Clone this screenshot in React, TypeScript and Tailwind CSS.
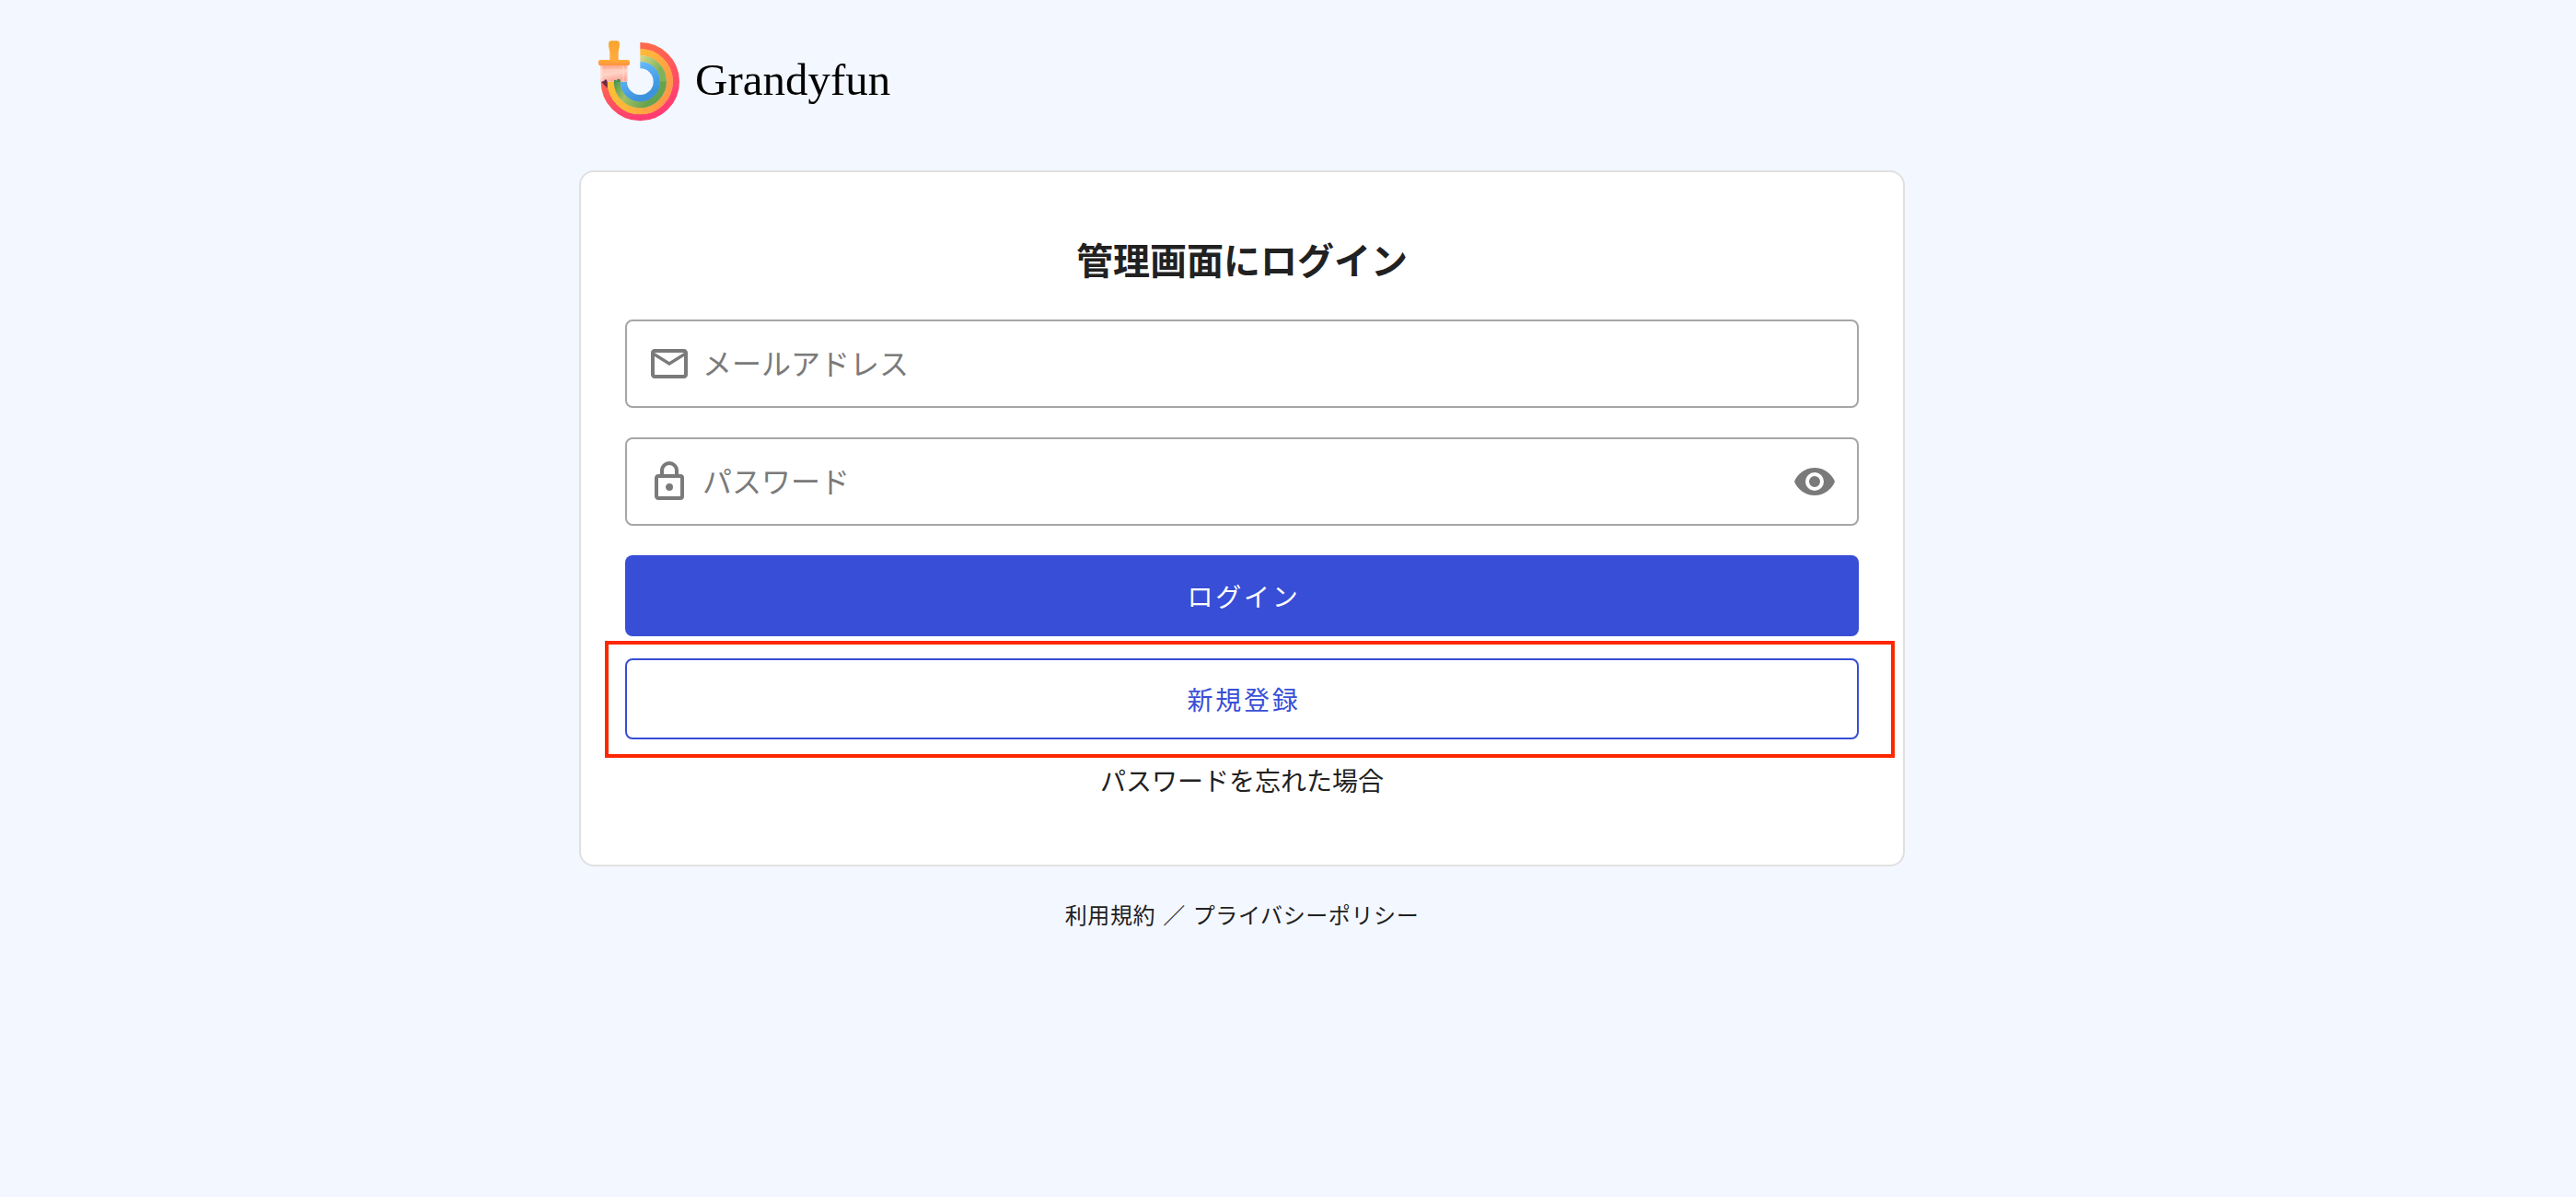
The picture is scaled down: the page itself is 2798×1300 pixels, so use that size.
import { useState } from "react";

const ICONS = {
  email:
    "M22 6C22 4.9 21.1 4 20 4H4C2.9 4 2 4.9 2 6V18C2 19.1 2.9 20 4 20H20C21.1 20 22 19.1 22 18V6M20 6L12 11L4 6H20M20 18H4V8L12 13L20 8V18Z",
  lock:
    "M12,17C10.89,17 10,16.1 10,15C10,13.89 10.89,13 12,13A2,2 0 0,1 14,15A2,2 0 0,1 12,17M18,20V10H6V20H18M18,8A2,2 0 0,1 20,10V20A2,2 0 0,1 18,22H6C4.89,22 4,21.1 4,20V10C4,8.89 4.89,8 6,8H7V6A5,5 0 0,1 12,1A5,5 0 0,1 17,6V8H18M12,3A3,3 0 0,0 9,6V8H15V6A3,3 0 0,0 12,3Z",
  eye:
    "M12,9A3,3 0 0,0 9,12A3,3 0 0,0 12,15A3,3 0 0,0 15,12A3,3 0 0,0 12,9M12,17A5,5 0 0,1 7,12A5,5 0 0,1 12,7A5,5 0 0,1 17,12A5,5 0 0,1 12,17M12,4.5C7,4.5 2.73,7.61 1,12C2.73,16.39 7,19.5 12,19.5C17,19.5 21.27,16.39 23,12C21.27,7.61 17,4.5 12,4.5Z",
};

function Icon({ name }: { name: keyof typeof ICONS }) {
  return (
    <svg viewBox="0 0 24 24" className="size-12 shrink-0 fill-[#7a7a7a]" aria-hidden="true">
      <path d={ICONS[name]} />
    </svg>
  );
}

function Logo() {
  return (
    <svg viewBox="90 74 267 264" className="h-[88px] w-[89px] shrink-0" aria-hidden="true">
      <defs>
        <linearGradient id="red" x1="0" y1="0" x2="0.5" y2="1">
          <stop offset="0" stopColor="#ff7043" />
          <stop offset="0.5" stopColor="#ff5f56" />
          <stop offset="1" stopColor="#ff3d71" />
        </linearGradient>
        <linearGradient id="orange" x1="0" y1="0.3" x2="1" y2="0.7">
          <stop offset="0" stopColor="#ffc233" />
          <stop offset="0.5" stopColor="#ffb43c" />
          <stop offset="1" stopColor="#ff9648" />
        </linearGradient>
        <linearGradient id="green" gradientUnits="userSpaceOnUse" x1="226" y1="125" x2="290" y2="170">
          <stop offset="0" stopColor="#d8d887" />
          <stop offset="1" stopColor="#7fb35b" />
        </linearGradient>
        <linearGradient id="greenLow" gradientUnits="userSpaceOnUse" x1="142" y1="215" x2="250" y2="280">
          <stop offset="0" stopColor="#559b50" />
          <stop offset="0.4" stopColor="#a2c067" />
          <stop offset="1" stopColor="#67a24d" />
        </linearGradient>
        <linearGradient id="blue" x1="0" y1="0" x2="0.5" y2="1">
          <stop offset="0" stopColor="#6cc0ff" />
          <stop offset="1" stopColor="#3c93db" />
        </linearGradient>
        <linearGradient id="wood" x1="0" y1="0" x2="0" y2="1">
          <stop offset="0" stopColor="#f8a42c" />
          <stop offset="1" stopColor="#ffab42" />
        </linearGradient>
        <linearGradient id="ferrule" x1="0" y1="0" x2="0" y2="1">
          <stop offset="0" stopColor="#ffae35" />
          <stop offset="1" stopColor="#ff9040" />
        </linearGradient>
        <linearGradient id="bristle" x1="0" y1="0" x2="0.3" y2="1">
          <stop offset="0" stopColor="#ffbfae" />
          <stop offset="0.6" stopColor="#ffd3c6" />
          <stop offset="1" stopColor="#fca99b" />
        </linearGradient>
      </defs>
      <g fill="none" strokeWidth="22">
        <path d="M226 91A117 117 0 1 1 109 208" stroke="url(#red)" />
        <path d="M226 112A96 96 0 1 1 130 208" stroke="url(#orange)" />
        <path d="M226 133A75 75 0 0 1 301 208" stroke="url(#green)" />
        <path d="M301 207A75 75 0 0 1 151 208" stroke="url(#greenLow)" />
        <path d="M226 154A54 54 0 1 1 172 208" stroke="url(#blue)" />
      </g>
      <path d="M97 154H186V208H97Z" fill="url(#bristle)" />
      <path d="M97 154H186V166H97Z" fill="#f99a7b" opacity="0.45" />
      <path d="M97 154H103V208H97ZM170 154H173V208H170ZM182 154H186V208H182Z" fill="#ffe3da" opacity="0.7" />
      <path d="M99 208Q108 209 113 201Q119 202 119 213V229Z" fill="#6b2b45" />
      <path d="M141 209V204Q145 200 149 205L152 200Q162 197 162 209Z" fill="#43904f" />
      <path d="M123 86Q123 75 133 75H149Q159 75 159 86C159 98 155 104 155 116V138H127V116C127 104 123 98 123 86Z" fill="url(#wood)" />
      <rect x="90" y="137" width="102" height="19" rx="7" fill="url(#ferrule)" />
    </svg>
  );
}

export default function App() {
  const [visible, setVisible] = useState(false);
  return (
    <div className="min-h-screen bg-[#f3f7ff] pr-[100px] font-['Noto_Sans_CJK_JP',sans-serif] text-[#212121]">
      <div className="mx-auto flex max-w-[1440px] flex-col">
        <header className="flex items-center gap-4 pt-11 pb-[53px] pl-[21px]">
          <Logo />
          <span className="pb-1 font-['Liberation_Serif',serif] text-[49px] leading-none text-black">Grandyfun</span>
        </header>

        <main className="rounded-2xl border-2 border-[#e0e0e0] bg-white px-12 pt-16 pb-[72px]">
          <h1 className="mb-9 text-center text-[40px] leading-[60px] font-bold">管理画面にログイン</h1>
          <form className="flex flex-col" onSubmit={(e) => e.preventDefault()}>
            <label className="mb-8 flex h-24 items-center rounded-lg border-2 border-[#a6a6a6] px-[22px]">
              <Icon name="email" />
              <input
                type="email"
                aria-label="メールアドレス"
                placeholder="メールアドレス"
                className="ml-3 min-w-0 grow pb-1 text-[32px] outline-none placeholder:text-[#7a7a7a]"
              />
            </label>
            <div className="mb-8 flex h-24 items-center rounded-lg border-2 border-[#a6a6a6] px-[22px]">
              <Icon name="lock" />
              <input
                type={visible ? "text" : "password"}
                aria-label="パスワード"
                placeholder="パスワード"
                className="ml-3 min-w-0 grow pb-1 text-[32px] outline-none placeholder:text-[#7a7a7a]"
              />
              <button type="button" aria-label="パスワードを表示" onClick={() => setVisible(!visible)}>
                <Icon name="eye" />
              </button>
            </div>
            <button type="submit" className="mb-6 h-[88px] rounded-lg bg-[#384ed6] pl-1 text-[28px] tracking-widest text-white">
              ログイン
            </button>
            <div className="relative mb-6 flex">
              <button type="button" className="h-[88px] grow rounded-lg border-2 border-[#384ed6] pl-1 text-[28px] tracking-widest text-[#384ed6]">
                新規登録
              </button>
              <div className="pointer-events-none absolute -top-[19px] -right-[39px] -bottom-5 -left-[22px] border-4 border-[#ff2600]" />
            </div>
            <a href="#reset" className="self-center text-[28px] leading-10">
              パスワードを忘れた場合
            </a>
          </form>
        </main>

        <footer className="mt-8 text-center text-2xl leading-10 tracking-wide">
          <a href="#terms">利用規約</a>
          <span className="mx-2">／</span>
          <a href="#privacy">プライバシーポリシー</a>
        </footer>
      </div>
    </div>
  );
}
